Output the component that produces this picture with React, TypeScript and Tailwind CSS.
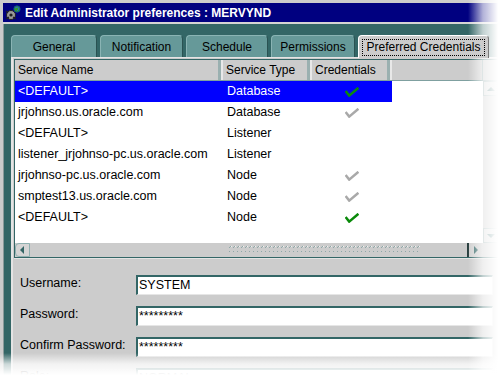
import React from 'react';

// Oracle EM style dialog: Preferred Credentials tab
const TABS = [
  { label: 'General', w: 'w-[86px]' },
  { label: 'Notification', w: 'w-[83px]' },
  { label: 'Schedule', w: 'w-[82px]' },
  { label: 'Permissions', w: 'w-[84px]' },
  { label: 'Preferred Credentials', w: 'w-[131px]', active: true },
];

type Cred = 'set' | 'inherited' | undefined;

const ROWS: { name: string; type: string; cred?: Cred }[] = [
  { name: '<DEFAULT>', type: 'Database', cred: 'set' },
  { name: 'jrjohnso.us.oracle.com', type: 'Database', cred: 'inherited' },
  { name: '<DEFAULT>', type: 'Listener' },
  { name: 'listener_jrjohnso-pc.us.oracle.com', type: 'Listener' },
  { name: 'jrjohnso-pc.us.oracle.com', type: 'Node', cred: 'inherited' },
  { name: 'smptest13.us.oracle.com', type: 'Node', cred: 'inherited' },
  { name: '<DEFAULT>', type: 'Node', cred: 'set' },
];

const FIELDS = [
  { label: 'Username:', value: 'SYSTEM' },
  { label: 'Password:', value: '*********' },
  { label: 'Confirm Password:', value: '*********' },
  { label: 'Role:', value: 'NORMAL' },
];

function Check({ color }: { color: string }) {
  return (
    <svg width="14" height="10" viewBox="0 0 14 10">
      <path d="M0.6 4 L4.2 8.6 L13.4 0.8" fill="none" stroke={color} strokeWidth="2.5" strokeLinejoin="miter" />
    </svg>
  );
}

function TitleIcon() {
  return (
    <svg width="16" height="16" viewBox="0 0 16 16">
      <circle cx="6" cy="10" r="4.5" fill="#9a9a9a" stroke="#202020" strokeWidth="1" />
      <circle cx="6" cy="10" r="1.6" fill="#202020" />
      <path d="M1 14 L4 12 M11 14 L8 12 M1 6 L3 8" stroke="#202020" strokeWidth="1.2" />
      <circle cx="12" cy="4" r="3.2" fill="#2a9a2a" stroke="#0a4a9a" strokeWidth="0.8" />
      <path d="M10 3 L12.5 2 L14 4 L12 6" fill="none" stroke="#3060d0" strokeWidth="0.9" />
    </svg>
  );
}

function Arrow({ dir }: { dir: 'left' | 'right' | 'up' | 'down' }) {
  const d = {
    left: 'M7 2 L3 6 L7 10 Z',
    right: 'M4 2 L8 6 L4 10 Z',
    up: 'M2 8 L6 4 L10 8 Z',
    down: 'M2 4 L6 8 L10 4 Z',
  }[dir];
  return (
    <svg width="12" height="12" viewBox="0 0 12 12">
      <path d={d} fill="#336666" />
    </svg>
  );
}

function Grip() {
  return (
    <svg width="192" height="9" viewBox="0 0 192 9">
      <defs>
        <pattern id="grip" width="4" height="4" patternUnits="userSpaceOnUse">
          <rect x="2" y="0" width="1" height="1" fill="#8fa8a8" />
          <rect x="1" y="1" width="1" height="1" fill="#8fa8a8" />
          <rect x="3" y="0" width="1" height="1" fill="#f0f0f0" />
        </pattern>
      </defs>
      <rect x="0" y="0" width="192" height="3" fill="url(#grip)" />
      <rect x="0" y="5" width="192" height="3" fill="url(#grip)" />
    </svg>
  );
}

export default function App() {
  return (
    <div className="relative h-[375px] w-[498px] overflow-hidden bg-[#cccccc] pl-[3px] pt-[3px] font-['Liberation_Sans',Arial,sans-serif] text-[12px] text-black">
      <div className="flex h-full flex-col">
        {/* Title bar */}
        <div className="flex h-[19px] shrink-0 items-center gap-[4px] bg-[#000080] pl-[2px] text-[12px] font-bold text-white">
          <TitleIcon />
          <span>Edit Administrator preferences : MERVYND</span>
        </div>
        <div className="h-[2px] shrink-0 bg-[#d4d4d4]" />

        {/* Dialog body */}
        <div className="flex-1 border-l border-[#8a9a9a] bg-[#336666] pt-[11px] pl-[7px]">
          {/* Tabs */}
          <div className="flex h-[22px] items-end gap-[3px]">
            {TABS.map((t) =>
              t.active ? (
                <div
                  key={t.label}
                  className={`${t.w} relative z-10 -mb-[1px] flex h-[23px] items-center justify-center rounded-t-[4px] border-l border-t border-r border-white border-r-[#7a7a7a] bg-[#cccccc]`}
                >
                  <span className="border border-dotted border-black px-[3px] leading-[15px]">{t.label}</span>
                </div>
              ) : (
                <div
                  key={t.label}
                  className={`${t.w} flex h-[22px] items-center justify-center rounded-t-[4px] border-l border-t border-r border-[#8ab4b4] border-r-[#2a5252] bg-[#669999]`}
                >
                  {t.label}
                </div>
              ),
            )}
          </div>

          {/* Tab panel */}
          <div className="h-full border-l-2 border-t border-[#e4e4e4] bg-[#cccccc] pl-[1px] pt-[1px]">
            <div className="border-l border-t border-[#336666]">
              <div className="flex">
                <div className="w-[468px]">
                  {/* Header */}
                  <div className="flex h-[21px] border-b border-[#7fa0a0] bg-[#cccccc]">
                    <div className="flex w-[208px] items-center border-r-2 border-r-[#e8e8e8] pl-[3px] shadow-[inset_-3px_0_0_#9ab0b0]">Service Name</div>
                    <div className="flex w-[89px] items-center border-r-2 border-r-[#e8e8e8] pl-[3px] shadow-[inset_-3px_0_0_#9ab0b0]">Service Type</div>
                    <div className="flex w-[80px] items-center border-r-2 border-r-[#e8e8e8] pl-[3px] shadow-[inset_-3px_0_0_#9ab0b0]">Credentials</div>
                    <div className="w-[91px] border-r border-[#9ab0b0]" />
                  </div>
                  {/* Body */}
                  <div className="h-[162px] bg-white text-[12.5px]">
                    {ROWS.map((r, i) => {
                      const sel = i === 0;
                      const cell = sel ? 'bg-[#0000ff] text-white' : '';
                      return (
                        <div key={i} className="flex h-[21px]">
                          <div className={`flex w-[208px] items-center pl-[3px] ${cell}`}>{r.name}</div>
                          <div className={`flex w-[89px] items-center pl-[4px] ${cell}`}>{r.type}</div>
                          <div className={`flex w-[80px] items-center justify-center ${cell}`}>
                            {r.cred === 'set' && <Check color="#0a8a0a" />}
                            {r.cred === 'inherited' && <Check color="#a9a9a9" />}
                          </div>
                          <div className="w-[91px]" />
                        </div>
                      );
                    })}
                  </div>
                </div>

                {/* Vertical scrollbar */}
                <div className="flex w-[15px] flex-col bg-[#cccccc]">
                  <div className="h-[21px] border-b border-[#9ab0b0]" />
                  <div className="flex h-[15px] items-center justify-center border border-[#9ab0b0] bg-[#d8d8d8]">
                    <Arrow dir="up" />
                  </div>
                  <div className="flex-1" />
                  <div className="flex h-[15px] items-center justify-center border border-[#9ab0b0] bg-[#d8d8d8]">
                    <Arrow dir="down" />
                  </div>
                </div>
              </div>

              {/* Horizontal scrollbar */}
              <div className="flex h-[15px] border-b border-[#336666] bg-[#cccccc]">
                <div className="flex w-[15px] items-center justify-center rounded-l-[4px] border border-[#8fb0b0] bg-[#d4d4d4]">
                  <Arrow dir="left" />
                </div>
                <div className="flex w-[437px] items-center justify-end pr-[47px]">
                  <Grip />
                </div>
                <div className="flex w-[16px] items-center justify-center border-l-2 border-[#2a4040] bg-[#d0d0d0]">
                  <Arrow dir="right" />
                </div>
                <div className="flex-1 bg-[#cccccc]" />
              </div>
            </div>

            {/* Credential fields */}
            <div className="flex flex-col gap-[11px] border-t border-[#e4e4e4] pl-[6px] pt-[16px] text-[12.5px]">
              {FIELDS.map((f) => (
                <div key={f.label} className="flex h-[20px] items-center">
                  <div className="w-[116px] -translate-y-[2px]">{f.label}</div>
                  <div className="flex h-[20px] w-[357px] items-center border-l-2 border-t-2 border-b border-r border-[#336666] border-b-[#e6e6e6] border-r-[#e6e6e6] bg-white pl-[1px]">
                    {f.value}
                  </div>
                </div>
              ))}
            </div>
          </div>
        </div>
      </div>

      {/* Faded screenshot edges */}
      <div className="pointer-events-none absolute right-0 top-0 h-full w-[30px] bg-gradient-to-r from-white/0 via-white/70 to-white" />
      <div className="pointer-events-none absolute bottom-0 left-0 h-[22px] w-full bg-gradient-to-b from-white/0 via-white/75 to-white" />
    </div>
  );
}
